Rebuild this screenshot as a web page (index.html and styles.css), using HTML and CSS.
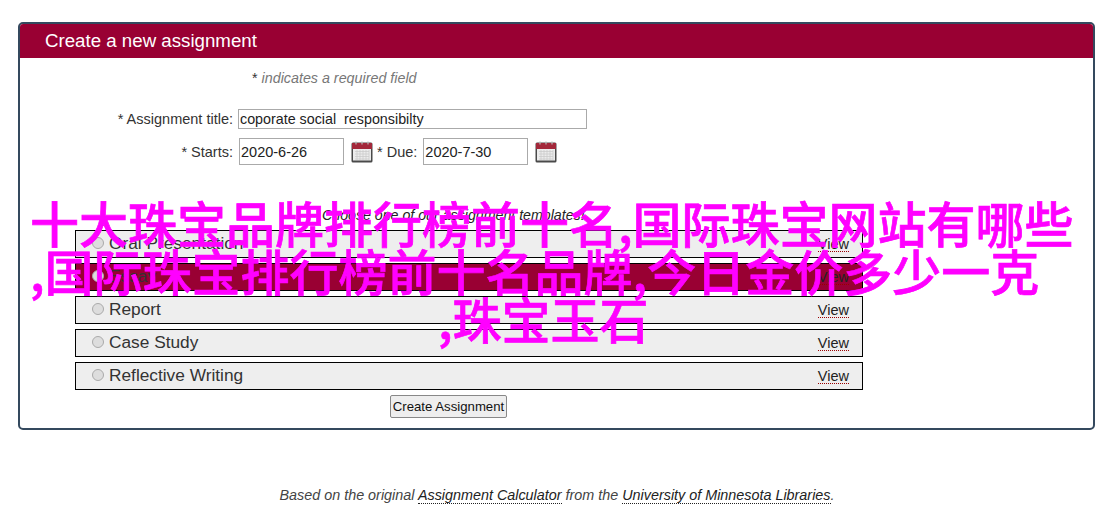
FILE: index.html
```html
<!DOCTYPE html>
<html lang="zh">
<head>
<meta charset="utf-8">
<title>Create a new assignment</title>
<link rel="stylesheet" href="styles.css">
</head>
<body>
<main class="page">
  <section class="card">
    <h1 class="card-title">Create a new assignment</h1>
    <form class="form">
      <p class="required"><span class="star">*</span> indicates a required field</p>
      <div class="field-row title-row">
        <label class="label label-title">* Assignment title:</label>
        <input class="input input-title" type="text" value="coporate social  responsibilty">
      </div>
      <div class="field-row date-row">
        <label class="label label-starts">* Starts:</label>
        <input class="input input-date" type="text" value="2020-6-26">
        <svg class="cal" viewBox="0 0 22 22" aria-hidden="true"><use href="#cal-icon"></use></svg>
        <label class="label label-due">* Due:</label>
        <input class="input input-date" type="text" value="2020-7-30">
        <svg class="cal" viewBox="0 0 22 22" aria-hidden="true"><use href="#cal-icon"></use></svg>
      </div>
      <p class="choose">Choose one of our assignment templates!</p>
      <ul class="templates">
        <li class="template"><span class="radio"></span><span class="name">Oral Presentation</span><a class="view" href="#">View</a></li>
        <li class="template selected"><span class="radio"></span><span class="name">Essay</span><a class="view" href="#">View</a></li>
        <li class="template"><span class="radio"></span><span class="name">Report</span><a class="view" href="#">View</a></li>
        <li class="template"><span class="radio"></span><span class="name">Case Study</span><a class="view" href="#">View</a></li>
        <li class="template"><span class="radio"></span><span class="name">Reflective Writing</span><a class="view" href="#">View</a></li>
      </ul>
      <div class="actions"><button class="submit" type="button">Create Assignment</button></div>
    </form>
  </section>
  <footer class="footer">Based on the original <a href="#">Assignment Calculator</a> from the <a href="#">University of Minnesota Libraries</a>.</footer>
  <div class="overlay">
    <div class="line">十大珠宝品牌排行榜前十名,国际珠宝网站有哪些</div>
    <div class="line">,国际珠宝排行榜前十名品牌,今日金价多少一克</div>
    <div class="line line-last">,珠宝玉石</div>
  </div>
</main>
<svg class="defs" width="0" height="0" aria-hidden="true">
  <symbol id="cal-icon" viewBox="0 0 22 22">
    <rect x="0.5" y="1.5" width="21" height="20" rx="1.5" fill="#4a4a4a"/>
    <rect x="1" y="2" width="20" height="6" fill="#a3283a"/>
    <rect x="2" y="8" width="18" height="11.5" fill="#ececec"/>
    <path d="M4 10.5h14M4 13h14M4 15.500h14M4 18h14M6 9v10M9 9v10M12 9v10M15 9v10M18 9v10" stroke="#c8c8c8" stroke-width=".7" fill="none"/>
    <path d="M5 0.500v3M11 0.500v3M17 0.500v3" stroke="#bbb" stroke-width="1.200"/>
  </symbol>
</svg>
</body>
</html>
```
FILE: styles.css
```css
* { box-sizing: border-box; }
html, body { margin: 0; padding: 0; background: #fff; }
body { font-family: "Liberation Sans", Arial, sans-serif; color: #333; width: 1116px; height: 526px; overflow: hidden; }
.page { position: relative; height: 526px; padding: 22px 21px 0 18px; }
.card { height: 408px; border: 2px solid #34495e; border-radius: 5px; overflow: hidden; }
.card-title { margin: 0; height: 34px; padding: 0 0 0 25px; background: #990033; color: #fff; font-size: 18.7px; font-weight: normal; line-height: 34px; }
.form { display: block; }
.required { margin: 12px 0 0 232px; height: 16px; font-size: 14.3px; line-height: 16px; font-style: italic; color: #777; }
.star { color: #333; font-style: normal; }
.field-row { display: flex; align-items: center; }
.label { font-size: 14.5px; text-align: right; color: #333; }
.title-row { margin-top: 23px; height: 20px; }
.label-title { width: 213px; margin-right: 5px; }
.input { font-family: "Liberation Sans", Arial, sans-serif; font-size: 14.5px; color: #222; border: 1px solid #aaa; background: #fff; padding: 0 1px; outline: none; border-radius: 0; margin: 0; }
.input-title { width: 349px; height: 20px; font-size: 14.3px; }
.date-row { margin-top: 9px; height: 27px; }
.label-starts { width: 213px; margin-right: 6px; }
.input-date { width: 105px; height: 27px; }
.cal { width: 22px; height: 22px; margin-left: 7px; flex: none; }
.label-due { margin: 0 6px 0 4px; }
.choose { margin: 42px 0 7px 302px; height: 16px; font-size: 14.2px; line-height: 16px; font-style: italic; color: #222; }
.templates { list-style: none; margin: 0 0 0 55px; padding: 0; width: 788px; display: flex; flex-direction: column; gap: 5px; }
.template { display: flex; align-items: center; height: 28px; border: 1px solid #000; background: #eee; padding: 0 13px 0 16px; }
.template.selected { background: #990033; }
.radio { width: 12px; height: 12px; border-radius: 50%; border: 1px solid #aaa; background: #ddd; margin: -3px 5px 0 0; flex: none; }
.name { font-size: 17.3px; line-height: 20px; color: #333; flex: 1; margin-top: -2px; }
.view { font-size: 14.5px; color: #222; text-decoration: none; border-bottom: 1px dotted #900; line-height: 13px; margin-top: 2px; }
.actions { text-align: center; margin: 5px 0 0 0; padding-right: 216px; }
.submit { width: 117px; height: 23px; padding: 0; font-family: "Liberation Sans", Arial, sans-serif; font-size: 13.2px; color: #111; background: #eee; border: 1px solid #888; border-radius: 2px; }
.footer { margin-top: 57px; text-align: center; font-size: 14.37px; line-height: 16px; font-style: italic; color: #444; padding-left: 1px; }
.footer a { color: #222; text-decoration: none; border-bottom: 1px dotted #222; }
.overlay { position: absolute; left: 30px; top: 198px; color: #ff00ff; font-family: "Noto Sans CJK SC", sans-serif; font-size: 49px; line-height: 48px; font-weight: 500; -webkit-text-stroke: 0.7px #ff00ff; white-space: nowrap; }
.line-last { margin-left: 408px; }
.defs { position: absolute; }
```
